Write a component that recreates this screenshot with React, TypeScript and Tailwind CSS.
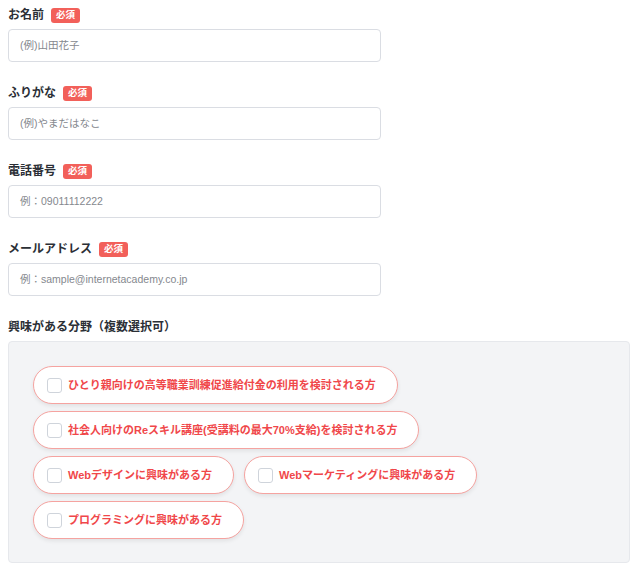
import React from "react";

const font = { fontFamily: '"Liberation Sans", "Noto Sans CJK JP", sans-serif' };

function Badge() {
  return (
    <span className="inline-flex h-[15px] items-center rounded-[3px] bg-[#f2605a] px-[5px] text-[9.5px] font-bold leading-none text-white">
      必須
    </span>
  );
}

function Field({ label, placeholder, required = true }: { label: string; placeholder: string; required?: boolean }) {
  return (
    <div className="mb-[23px]">
      <div className="mb-[6px] flex h-[16px] items-center gap-[7px]">
        <span className="text-[12px] font-bold leading-none text-[#2b2f36]">{label}</span>
        {required && <Badge />}
      </div>
      <div className="flex h-[33px] w-[373px] items-center rounded-[4px] border border-[#dadde3] bg-white px-[11px] text-[10.5px] text-[#85888e]">
        {placeholder}
      </div>
    </div>
  );
}

function Pill({ text }: { text: string }) {
  return (
    <div className="flex h-[38px] items-center gap-[6px] rounded-full border border-[#f5a3a0] bg-white pl-[13px] pr-[21px] shadow-[0_2px_4px_rgba(0,0,0,0.08)]">
      <span className="h-[15px] w-[15px] rounded-[3px] border border-[#cfd4db] bg-white" />
      <span className="text-[11px] font-bold leading-none text-[#f0474a]">{text}</span>
    </div>
  );
}

export default function App() {
  return (
    <div className="min-h-[571px] w-[640px] bg-white px-[8px] pt-[7px]" style={font}>
      <Field label="お名前" placeholder="(例)山田花子" />
      <Field label="ふりがな" placeholder="(例)やまだはなこ" />
      <Field label="電話番号" placeholder="例：09011112222" />
      <Field label="メールアドレス" placeholder="例：sample@internetacademy.co.jp" />
      <div className="mb-[6px] flex h-[16px] items-center">
        <span className="text-[12px] font-bold leading-none text-[#2b2f36]">興味がある分野（複数選択可）</span>
      </div>
      <div className="w-[622px] rounded-[4px] border border-[#e6e8ec] bg-[#f3f4f6] px-[24px] pb-[23px] pt-[24px]">
        <div className="flex flex-wrap gap-x-[10px] gap-y-[7px]">
          <div className="flex w-full">
            <Pill text="ひとり親向けの高等職業訓練促進給付金の利用を検討される方" />
          </div>
          <div className="flex w-full">
            <Pill text="社会人向けのReスキル講座(受講料の最大70%支給)を検討される方" />
          </div>
          <Pill text="Webデザインに興味がある方" />
          <Pill text="Webマーケティングに興味がある方" />
          <div className="flex w-full">
            <Pill text="プログラミングに興味がある方" />
          </div>
        </div>
      </div>
    </div>
  );
}
